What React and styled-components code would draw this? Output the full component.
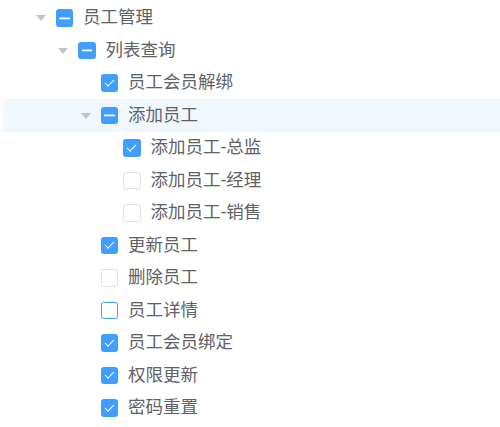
import React from "react";
import styled, { createGlobalStyle, css } from "styled-components";

const GlobalStyle = createGlobalStyle`
  html, body {
    margin: 0;
    padding: 0;
    background: #fff;
  }
  body {
    font-family: "Liberation Sans", "Noto Sans CJK SC", sans-serif;
  }
`;

const Tree = styled.div`
  width: 500px;
  height: 427px;
  overflow: hidden;
  padding: 1.5px 0 0 3px;
  box-sizing: border-box;
  color: #606266;
  font-size: 17.5px;
`;

const Node = styled.div`
  display: flex;
  align-items: center;
  height: 32.5px;
  padding-left: ${p => p.level * 22.5}px;
  background: ${p => (p.current ? "#f0f7ff" : "transparent")};
`;

const Expand = styled.span`
  width: 30px;
  height: 30px;
  display: flex;
  align-items: center;
  justify-content: center;
  flex-shrink: 0;
  &::before {
    content: "";
    display: ${p => (p.leaf ? "none" : "block")};
    width: 0;
    height: 0;
    border-left: 5px solid transparent;
    border-right: 5px solid transparent;
    border-top: 6px solid #c0c4cc;
    margin-top: 1px;
  }
`;

const Box = styled.span`
  position: relative;
  width: 17.5px;
  height: 17.5px;
  box-sizing: border-box;
  border-radius: 2.5px;
  border: 1.25px solid #dcdfe6;
  background: #fff;
  margin-right: 10px;
  flex-shrink: 0;
  ${p =>
    p.state === "focus" &&
    css`
      border-color: #409eff;
    `}
  ${p =>
    (p.state === "checked" || p.state === "half") &&
    css`
      background: #409eff;
      border-color: #409eff;
    `}
  ${p =>
    p.state === "checked" &&
    css`
      &::after {
        content: "";
        position: absolute;
        left: 5.2px;
        top: 1.8px;
        width: 3.5px;
        height: 8px;
        border: 1.25px solid #fff;
        border-left: 0;
        border-top: 0;
        transform: rotate(45deg);
      }
    `}
  ${p =>
    p.state === "half" &&
    css`
      &::after {
        content: "";
        position: absolute;
        left: 2.5px;
        right: 2.5px;
        top: 6.5px;
        height: 2.5px;
        background: #fff;
        transform: scaleY(0.6);
      }
    `}
`;

const Label = styled.span`
  line-height: 1;
  white-space: nowrap;
`;

const nodes = [
  { label: "员工管理", level: 1, state: "half" },
  { label: "列表查询", level: 2, state: "half" },
  { label: "员工会员解绑", level: 3, state: "checked", leaf: true },
  { label: "添加员工", level: 3, state: "half", current: true },
  { label: "添加员工-总监", level: 4, state: "checked", leaf: true },
  { label: "添加员工-经理", level: 4, state: "off", leaf: true },
  { label: "添加员工-销售", level: 4, state: "off", leaf: true },
  { label: "更新员工", level: 3, state: "checked", leaf: true },
  { label: "删除员工", level: 3, state: "off", leaf: true },
  { label: "员工详情", level: 3, state: "focus", leaf: true },
  { label: "员工会员绑定", level: 3, state: "checked", leaf: true },
  { label: "权限更新", level: 3, state: "checked", leaf: true },
  { label: "密码重置", level: 3, state: "checked", leaf: true },
];

export default function App() {
  return (
    <>
      <GlobalStyle />
      <Tree>
        {nodes.map(n => (
          <Node key={n.label} level={n.level} current={n.current}>
            <Expand leaf={n.leaf} />
            <Box state={n.state} />
            <Label>{n.label}</Label>
          </Node>
        ))}
      </Tree>
    </>
  );
}
